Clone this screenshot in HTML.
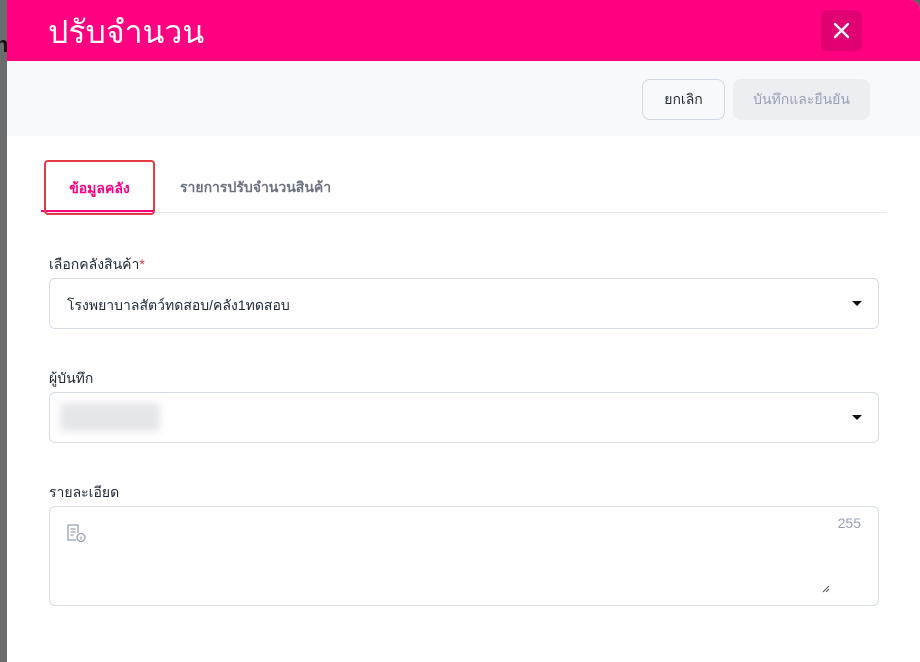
<!DOCTYPE html>
<html><head><meta charset="utf-8"><style>
*{box-sizing:border-box;margin:0;padding:0}
body{width:920px;height:662px;overflow:hidden;background:#5f6061;font-family:"Liberation Sans",sans-serif;position:relative}
.side{position:absolute;left:0;top:0;width:8px;height:662px;background:#6b6c6d}
.n{position:absolute;left:-5px;top:32px;font-size:22px;font-weight:bold;color:#111;}
.modal{position:absolute;left:7px;top:0;width:913px;height:662px;background:#fff;border-top-right-radius:10px;overflow:hidden}
.hdr{height:61px;background:#ff0080;position:relative}
.hdr h1{position:absolute;left:41px;top:12px;font-size:32px;font-weight:normal;color:#fff;line-height:40px}
.close{position:absolute;left:814px;top:10px;width:41px;height:41px;border-radius:7px;background:#e00072}
.bar{height:75px;background:#f8f9fb;position:relative}
.btn{position:absolute;top:18px;height:41px;border-radius:8px;font-size:14px;display:flex;align-items:center;justify-content:center}
.b1{left:635px;width:83px;border:1px solid #cfd8e3;color:#1f2937;background:#f8f9fb}
.b2{left:726px;width:137px;background:#eceef1;color:#98a2b3}
.tabs{position:absolute;left:34px;top:160px;width:846px;height:53px;border-bottom:1px solid #e5e7eb}
.t1{position:absolute;left:3px;top:0;width:111px;height:55px;border:2px solid #e53945;border-radius:4px;color:#ff0080;font-weight:bold;font-size:14px;text-align:center;line-height:52px}
.tu{position:absolute;left:0;top:50px;width:113px;height:2px;background:#ff0080}
.t2{position:absolute;left:139px;top:17px;font-size:14px;color:#6b7280;font-weight:bold}
.lbl{position:absolute;left:42px;font-size:14px;color:#1f2937}
.inp{position:absolute;left:42px;width:830px;border:1px solid #d7dde6;border-radius:6px;background:#fff}
.caret{position:absolute;right:16px;top:22px;width:0;height:0;border-left:5px solid transparent;border-right:5px solid transparent;border-top:5px solid #111}
</style></head><body>
<div class="side"></div><div class="n">n</div>
<div class="modal">
<div class="hdr"><h1>ปรับจำนวน</h1><div class="close"><svg width="41" height="41" viewBox="0 0 41 41"><path d="M14 14L27 27M27 14L14 27" stroke="#fff" stroke-width="2.4" stroke-linecap="round"/></svg></div></div>
<div class="bar"><div class="btn b1">ยกเลิก</div><div class="btn b2">บันทึกและยืนยัน</div></div>
<div class="tabs"><div class="tu"></div><div class="t1">ข้อมูลคลัง</div><div class="t2">รายการปรับจำนวนสินค้า</div></div>
<div class="lbl" style="top:254px">เลือกคลังสินค้า<span style="color:#e53945">*</span></div>
<div class="inp" style="top:278px;height:51px"><span style="position:absolute;left:17px;top:16px;font-size:14px;color:#1f2937">โรงพยาบาลสัตว์ทดสอบ/คลัง1ทดสอบ</span><div class="caret"></div></div>
<div class="lbl" style="top:368px">ผู้บันทึก</div>
<div class="inp" style="top:392px;height:51px"><div style="position:absolute;left:10px;top:10px;width:100px;height:28px;background:#e5e6e8;filter:blur(4px)"></div><div class="caret"></div></div>
<div class="lbl" style="top:482px">รายละเอียด</div>
<div class="inp" style="top:506px;height:100px">
<svg style="position:absolute;left:16px;top:16px" width="22" height="20" viewBox="0 0 22 20"><path d="M10 17H2V2h10v8M4.5 6h5M4.5 9h5M4.5 12h3" fill="none" stroke="#98a2b3" stroke-width="1.3"/><circle cx="15" cy="14.5" r="4" fill="none" stroke="#98a2b3" stroke-width="1.3"/><path d="M15 13.5v3" stroke="#98a2b3" stroke-width="1.3"/></svg>
<span style="position:absolute;right:17px;top:8px;font-size:14px;color:#98a2b3">255</span>
<svg style="position:absolute;right:48px;top:78px" width="8" height="8"><path d="M1 7L7 1M4 7L7 4" stroke="#555" stroke-width="1"/></svg>
</div>
</div>
</body></html>
